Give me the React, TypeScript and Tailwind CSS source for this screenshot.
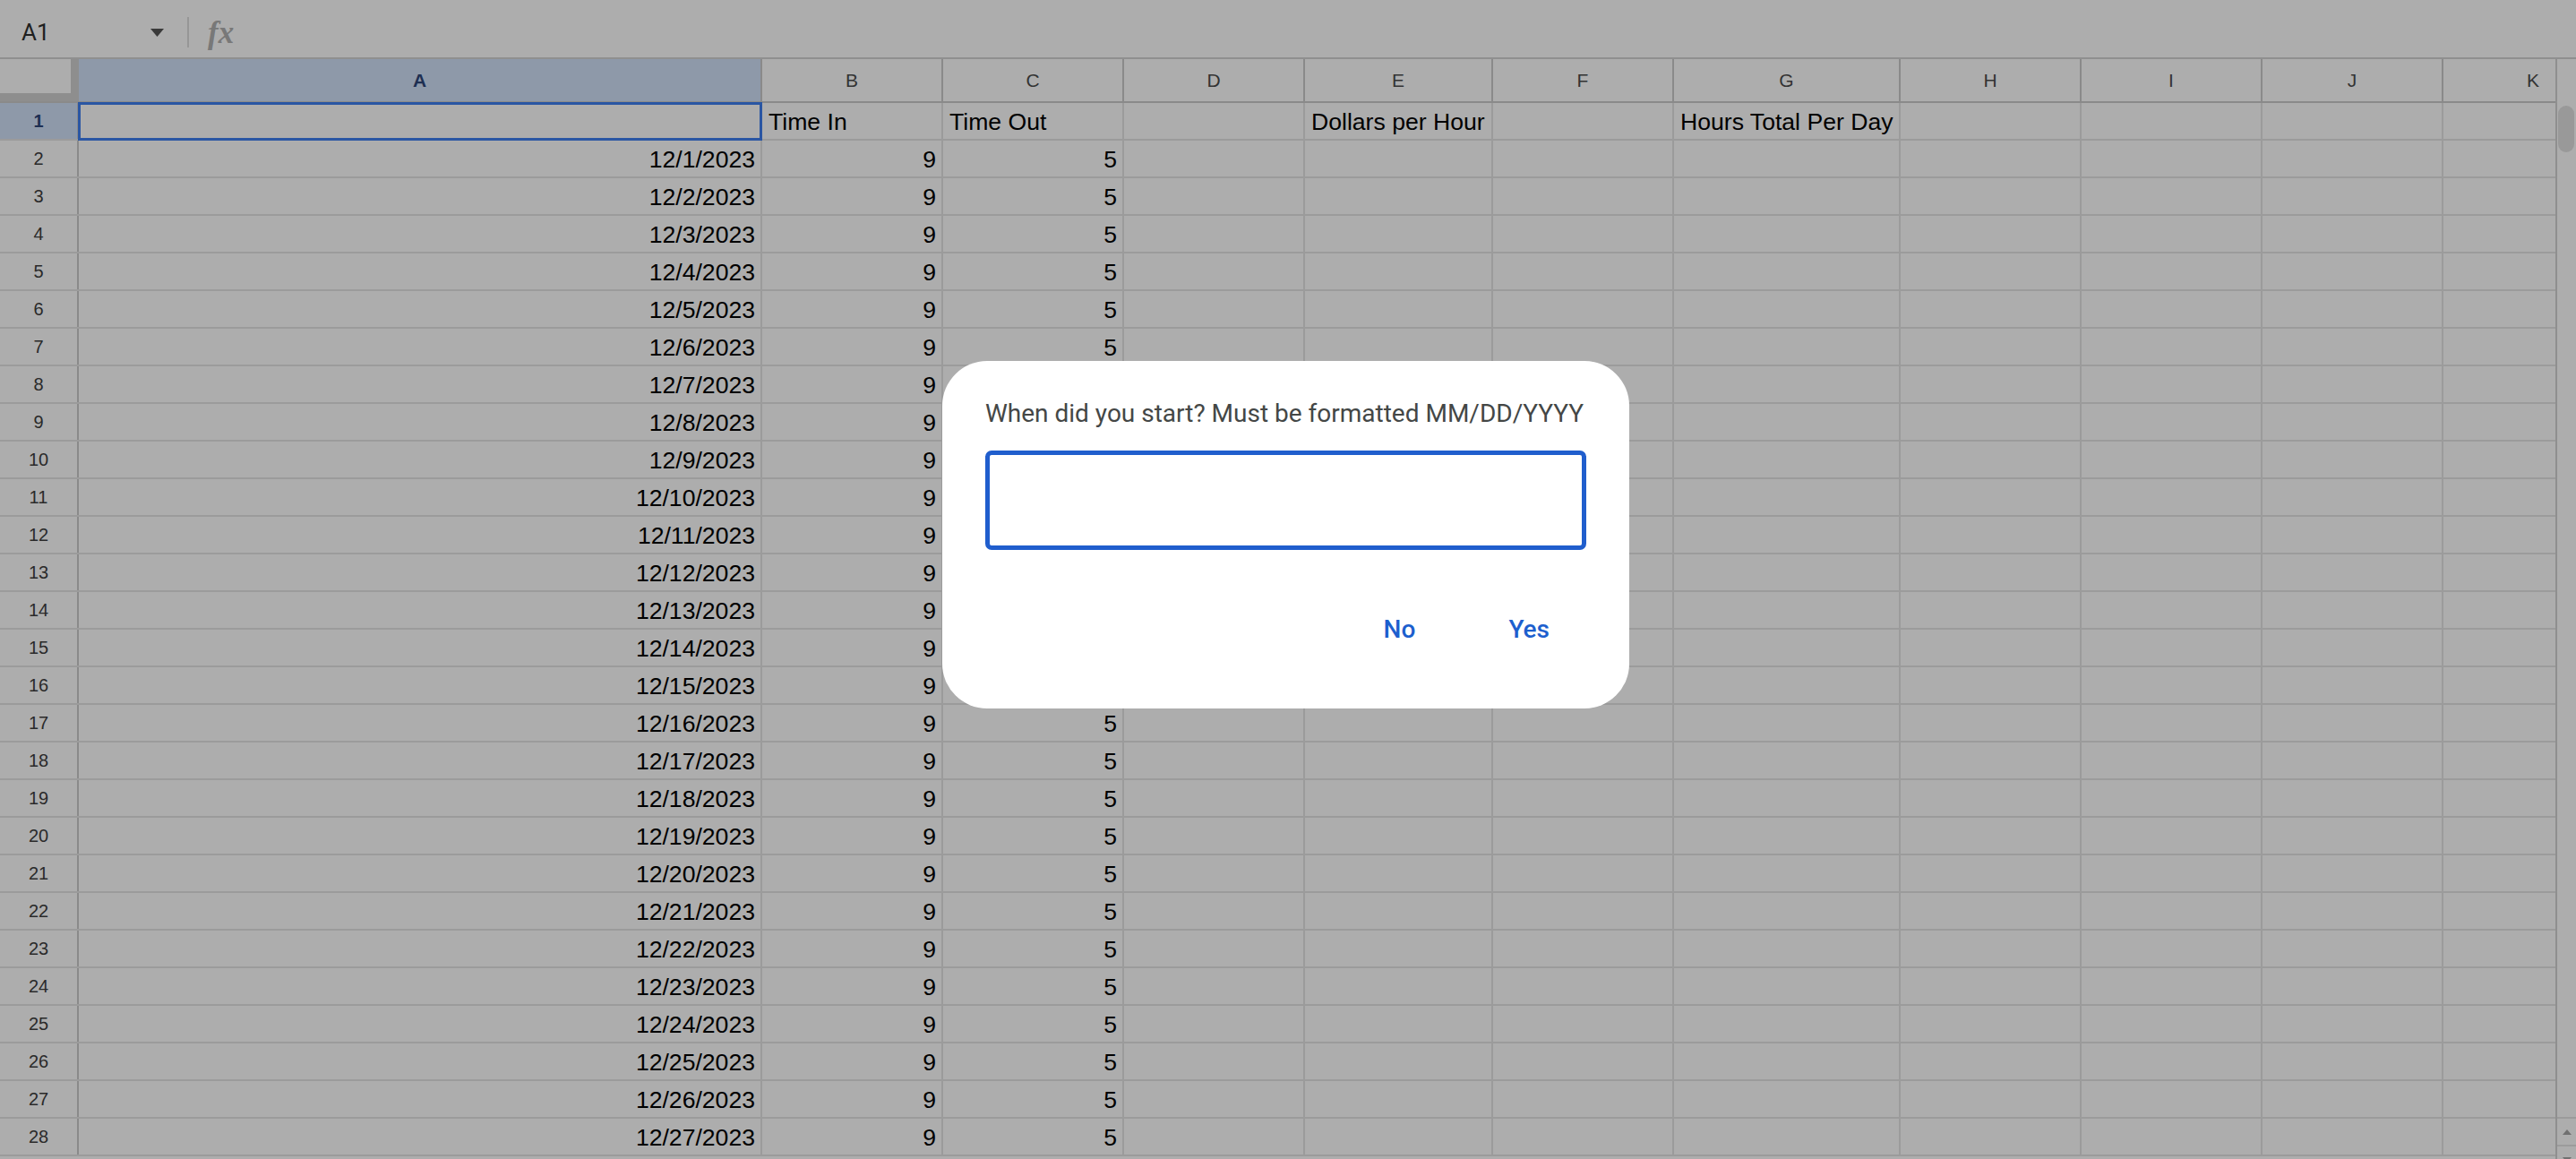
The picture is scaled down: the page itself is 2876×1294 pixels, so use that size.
import React from 'react';

type Col = { id: string; w: number };

const cols: Col[] = [
  { id: 'A', w: 763 },
  { id: 'B', w: 202 },
  { id: 'C', w: 202 },
  { id: 'D', w: 202 },
  { id: 'E', w: 210 },
  { id: 'F', w: 202 },
  { id: 'G', w: 253 },
  { id: 'H', w: 202 },
  { id: 'I', w: 202 },
  { id: 'J', w: 202 },
  { id: 'K', w: 202 },
];

type CellVal = { text: string; right?: boolean };

const headerRow: Record<string, CellVal> = {
  B: { text: 'Time In' },
  C: { text: 'Time Out' },
  E: { text: 'Dollars per Hour' },
  G: { text: 'Hours Total Per Day' },
};

const rows: Record<string, CellVal>[] = [headerRow];
for (let d = 1; d <= 27; d++) {
  rows.push({
    A: { text: `12/${d}/2023`, right: true },
    B: { text: '9', right: true },
    C: { text: '5', right: true },
  });
}

const cellFont = { fontFamily: '"Liberation Sans", Arial, sans-serif' };

export default function App() {
  return (
    <div className="relative h-[1294px] w-[2876px] overflow-hidden bg-[#adadad]" style={cellFont}>
      {/* Formula bar */}
      <div className="flex h-[66px] items-center border-b-2 border-[#8f8f8f] pt-[8px]">
        <div className="flex h-full w-[209px] items-center pl-[24px] pr-[26px]">
          <span className="flex-1 text-[26px] text-[#1f1f1f]" style={{ fontFamily: 'Roboto, sans-serif' }}>
            A1
          </span>
          <svg width="15" height="9" viewBox="0 0 15 9">
            <path d="M0 0 L15 0 L7.5 9 Z" fill="#3a3a3a" />
          </svg>
        </div>
        <div className="h-[34px] w-[2px] bg-[#969696]" />
        <span
          className="ml-[21px] text-[35px] font-bold italic leading-none text-[#787878]"
          style={{ fontFamily: '"Liberation Serif", serif' }}
        >
          fx
        </span>
      </div>

      <div className="flex">
        {/* Grid */}
        <div className="w-[2853px] overflow-hidden">
          {/* Column headers */}
          <div className="flex h-[49px] border-b-2 border-[#8a8a8a]">
            <div className="h-full w-[88px] shrink-0 border-b-[9px] border-r-[9px] border-[#8e8e8e]" />
            {cols.map((c) => (
              <div
                key={c.id}
                className={`flex h-full shrink-0 items-center justify-center border-r-2 border-[#8a8a8a] text-[21px] ${
                  c.id === 'A' ? 'bg-[#8e99a9] font-bold text-[#1e2f52]' : 'text-[#333]'
                }`}
                style={{ width: c.w }}
              >
                {c.id}
              </div>
            ))}
          </div>

          {/* Rows */}
          {rows.map((r, i) => (
            <div key={i} className="flex h-[42px] border-b-2 border-[#9b9b9b]">
              <div
                className={`flex h-full w-[88px] shrink-0 items-center justify-center border-r-2 border-[#8a8a8a] text-[20px] ${
                  i === 0 ? 'bg-[#8e99a9] font-bold text-[#1e2f52]' : 'text-[#2a2a2a]'
                }`}
              >
                {i + 1}
              </div>
              {cols.map((c) => {
                const v = r[c.id];
                return (
                  <div
                    key={c.id}
                    className={`relative h-full shrink-0 overflow-visible whitespace-nowrap border-r-2 border-[#9b9b9b] pl-[7px] pr-[6px] pt-[2px] text-[26.6px] leading-[38px] text-black ${
                      v?.right ? 'text-right' : 'text-left'
                    }`}
                    style={{ width: c.w }}
                  >
                    {v?.text}
                    {i === 0 && c.id === 'A' && (
                      <div className="absolute -left-[1px] -top-[1px] bottom-[-2px] right-[-2px] border-[3px] border-[#2a56a3]" />
                    )}
                  </div>
                );
              })}
            </div>
          ))}
        </div>

        {/* Scrollbar */}
        <div className="flex w-[23px] shrink-0 flex-col border-l-2 border-[#8f8f8f]">
          <div className="h-[1181px] pt-[52px] pl-[1px]">
            <div className="h-[52px] w-[18px] rounded-full bg-[#999]" />
          </div>
          <div className="flex h-[31px] items-center justify-center border-t-2 border-[#9b9b9b]">
            <svg width="10" height="6" viewBox="0 0 10 6">
              <path d="M0 6 L10 6 L5 0 Z" fill="#707070" />
            </svg>
          </div>
          <div className="flex h-[31px] items-center justify-center border-t-2 border-[#9b9b9b]">
            <svg width="10" height="6" viewBox="0 0 10 6">
              <path d="M0 0 L10 0 L5 6 Z" fill="#707070" />
            </svg>
          </div>
        </div>
      </div>

      {/* Prompt dialog */}
      <div
        className="absolute left-[1052px] top-[403px] flex h-[388px] w-[767px] flex-col rounded-[50px] bg-white px-[48px] pt-[41px]"
        style={{ fontFamily: 'Roboto, "Open Sans", sans-serif' }}
      >
        <p className="text-[28px] leading-[36px] text-[#444746]">
          When did you start? Must be formatted MM/DD/YYYY
        </p>
        <div className="mt-[23px] h-[111px] w-full rounded-[7px] border-[5px] border-[#205ecd]" />
        <div className="mt-[71px] flex justify-end gap-[22px]">
          <button className="px-[41px] text-[28px] font-medium leading-[36px] text-[#1d5fce]">No</button>
          <button className="px-[41px] text-[28px] font-medium leading-[36px] text-[#1d5fce]">Yes</button>
        </div>
      </div>
    </div>
  );
}
